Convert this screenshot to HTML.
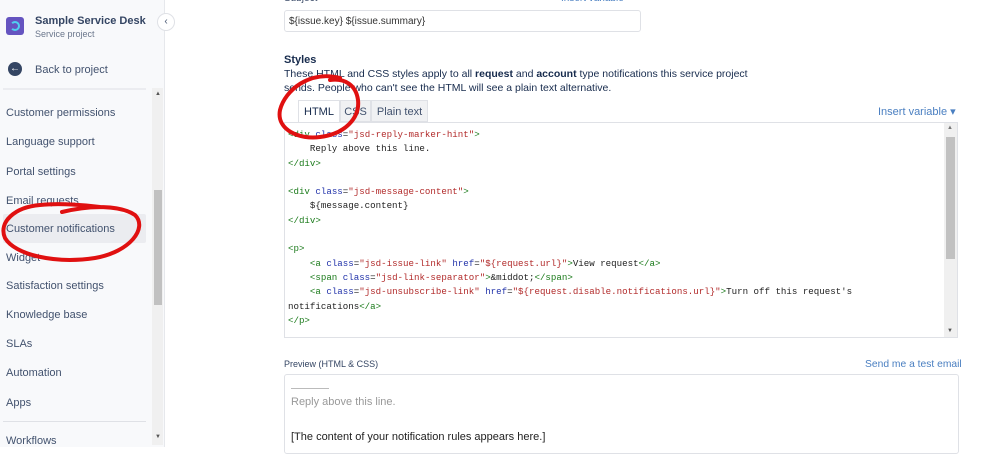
<!DOCTYPE html>
<html><head><style>
*{margin:0;padding:0;box-sizing:border-box}
body{width:998px;height:447px;overflow:hidden;background:#fff;font-family:"Liberation Sans",sans-serif;position:relative;color:#172b4d}
.sb{position:absolute;left:0;top:0;width:165px;height:447px;background:#f8f9fb;border-right:1px solid #e6e8ec}
.a{position:absolute;font-size:11px;color:#42526e}
.nav{position:absolute;left:6px;font-size:11px;color:#42526e}
.code{position:absolute;left:284px;top:122px;width:674px;height:216px;border:1px solid #dfe1e6;font-family:"Liberation Mono",monospace;font-size:9.15px;line-height:14.3px;color:#222;padding:5px 0 0 3px;white-space:pre;overflow:hidden}
.t{color:#1a7a1a}.n{color:#2233aa}.s{color:#b22b2b}
</style></head><body>
<div class="sb"></div>
<div style="position:absolute;left:6px;top:17px;width:18px;height:18px;background:#6554c0;border-radius:3px"></div>
<div style="position:absolute;left:10px;top:21px;width:10px;height:10px;border:2px solid #4fd1f0;border-radius:50%;border-left-color:transparent"></div>
<div class="a" style="left:35px;top:15px;font-weight:bold;color:#344563">Sample Service Desk</div>
<div class="a" style="left:35px;top:29px;font-size:9px;color:#6b778c">Service project</div>
<div style="position:absolute;left:8px;top:62px;width:14px;height:14px;border-radius:50%;background:#344563;color:#fff;font-size:10px;line-height:14px;text-align:center">←</div>
<div class="a" style="left:35px;top:64px">Back to project</div>
<div style="position:absolute;left:157px;top:13px;width:18px;height:18px;border-radius:50%;background:#fff;border:1px solid #dfe1e6;font-size:10px;line-height:15px;text-align:center;color:#42526e">‹</div>
<div style="position:absolute;left:3px;top:88px;width:143px;height:2px;background:#ebecf0"></div>
<div style="position:absolute;left:152px;top:88px;width:11px;height:357px;background:#f0f0f0"></div>
<div style="position:absolute;left:154px;top:190px;width:8px;height:115px;background:#c1c1c1"></div>
<div style="position:absolute;left:155px;top:91px;font-size:6px;color:#555">▲</div>
<div style="position:absolute;left:155px;top:434px;font-size:6px;color:#555">▼</div>
<div style="position:absolute;left:3px;top:214px;width:143px;height:29px;background:#ebecf0;border-radius:2px"></div>
<div class="nav" style="top:107px">Customer permissions</div>
<div class="nav" style="top:136px">Language support</div>
<div class="nav" style="top:166px">Portal settings</div>
<div class="nav" style="top:195px">Email requests</div>
<div class="nav" style="top:223px">Customer notifications</div>
<div class="nav" style="top:252px">Widget</div>
<div class="nav" style="top:280px">Satisfaction settings</div>
<div class="nav" style="top:309px">Knowledge base</div>
<div class="nav" style="top:338px">SLAs</div>
<div class="nav" style="top:367px">Automation</div>
<div class="nav" style="top:397px">Apps</div>
<div style="position:absolute;left:3px;top:421px;width:143px;height:1px;background:#dfe1e6"></div>
<div class="nav" style="top:435px">Workflows</div>

<div style="position:absolute;left:284px;top:-7px;font-size:10px;color:#344563">Subject</div>
<div style="position:absolute;left:561px;top:-7px;font-size:10px;color:#4a7fc1">Insert variable</div>
<div style="position:absolute;left:284px;top:10px;width:357px;height:22px;border:1px solid #dfe1e6;border-radius:3px;font-size:10px;padding:5px 4px;color:#333">${issue.key} ${issue.summary}</div>
<div style="position:absolute;left:284px;top:54px;font-size:11px;font-weight:bold">Styles</div>
<div style="position:absolute;left:284px;top:67px;white-space:nowrap;font-size:10.5px;line-height:14px;color:#172b4d">These HTML and CSS styles apply to all <b>request</b> and <b>account</b> type notifications this service project<br>sends. People who can't see the HTML will see a plain text alternative.</div>
<div style="position:absolute;left:298px;top:100px;width:42px;height:23px;background:#fff;border:1px solid #dfe1e6;border-bottom:none;font-size:11px;text-align:center;line-height:22px">HTML</div>
<div style="position:absolute;left:340px;top:100px;width:31px;height:22px;background:#f0f1f3;border:1px solid #dfe1e6;font-size:11px;text-align:center;line-height:22px;color:#42526e">CSS</div>
<div style="position:absolute;left:371px;top:100px;width:57px;height:22px;background:#f0f1f3;border:1px solid #dfe1e6;font-size:11px;text-align:center;line-height:22px;color:#42526e">Plain text</div>
<div style="position:absolute;left:878px;top:105px;font-size:11px;color:#4a7fc1">Insert variable ▾</div>
<div class="code"><span class="t">&lt;div</span> <span class="n">class</span>=<span class="s">"jsd-reply-marker-hint"</span><span class="t">&gt;</span>
    Reply above this line.
<span class="t">&lt;/div&gt;</span>

<span class="t">&lt;div</span> <span class="n">class</span>=<span class="s">"jsd-message-content"</span><span class="t">&gt;</span>
    ${message.content}
<span class="t">&lt;/div&gt;</span>

<span class="t">&lt;p&gt;</span>
    <span class="t">&lt;a</span> <span class="n">class</span>=<span class="s">"jsd-issue-link"</span> <span class="n">href</span>=<span class="s">"${request.url}"</span><span class="t">&gt;</span>View request<span class="t">&lt;/a&gt;</span>
    <span class="t">&lt;span</span> <span class="n">class</span>=<span class="s">"jsd-link-separator"</span><span class="t">&gt;</span>&amp;middot;<span class="t">&lt;/span&gt;</span>
    <span class="t">&lt;a</span> <span class="n">class</span>=<span class="s">"jsd-unsubscribe-link"</span> <span class="n">href</span>=<span class="s">"${request.disable.notifications.url}"</span><span class="t">&gt;</span>Turn off this request's
notifications<span class="t">&lt;/a&gt;</span>
<span class="t">&lt;/p&gt;</span></div>
<div style="position:absolute;left:944px;top:123px;width:13px;height:214px;background:#f0f0f0"></div>
<div style="position:absolute;left:946px;top:137px;width:9px;height:122px;background:#c1c1c1"></div>
<div style="position:absolute;left:947px;top:125px;font-size:6px;color:#777">▲</div>
<div style="position:absolute;left:947px;top:328px;font-size:6px;color:#555">▼</div>

<div style="position:absolute;left:284px;top:359px;font-size:9px;color:#344563">Preview (HTML &amp; CSS)</div>
<div style="position:absolute;left:865px;top:359px;font-size:10.3px;color:#4a7fc1">Send me a test email</div>
<div style="position:absolute;left:284px;top:374px;width:675px;height:80px;border:1px solid #dfe1e6;border-radius:3px"></div>
<div style="position:absolute;left:291px;top:388px;width:38px;height:1px;background:#bbb"></div>
<div style="position:absolute;left:291px;top:396px;font-size:11px;color:#999">Reply above this line.</div>
<div style="position:absolute;left:291px;top:431px;font-size:11px;color:#222">[The content of your notification rules appears here.]</div>

<svg style="position:absolute;left:0;top:0" width="998" height="447">
<g fill="none" stroke="#e01010" stroke-width="4" stroke-linecap="round">
<path d="M340 78 C310 70 285 90 280 110 C276 130 300 140 320 137 C345 134 360 118 358 100 C356 85 345 78 330 80"/>
<path d="M62 212 C90 205 120 205 135 215 C148 228 130 252 95 258 C55 264 15 255 5 238 C-2 222 15 207 40 205 C60 203 85 205 100 207"/>
</g></svg>
</body></html>
